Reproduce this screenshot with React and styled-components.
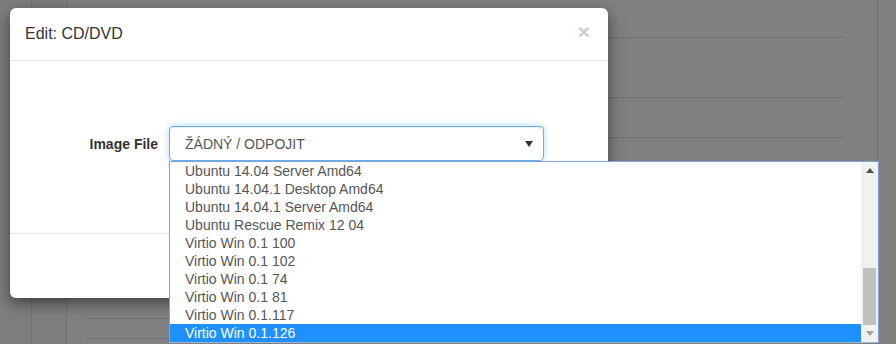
import styled, { createGlobalStyle } from 'styled-components';

const GlobalStyle = createGlobalStyle`
  html, body {
    margin: 0;
    padding: 0;
    background: #808080;
    overflow: hidden;
  }
  * {
    box-sizing: border-box;
  }
`;

const images = [
  'Ubuntu 14.04 Server Amd64',
  'Ubuntu 14.04.1 Desktop Amd64',
  'Ubuntu 14.04.1 Server Amd64',
  'Ubuntu Rescue Remix 12 04',
  'Virtio Win 0.1 100',
  'Virtio Win 0.1 102',
  'Virtio Win 0.1 74',
  'Virtio Win 0.1 81',
  'Virtio Win 0.1.117',
  'Virtio Win 0.1.126',
];

const rowHeights = [38, 60, 40, 41, 40, 40, 60, 20, 20];

const App = () => {
  return (
    <>
      <GlobalStyle />
      <Page>
        <Rail />
        <Rail $width={35} />
        <Main>
          <Table>
            {rowHeights.map((h, i) => (
              <TableRow key={i} $height={h} />
            ))}
          </Table>
        </Main>
        <Gutter />

        <Modal>
          <ModalHeader>
            <ModalTitle>Edit: CD/DVD</ModalTitle>
            <CloseButton>×</CloseButton>
          </ModalHeader>
          <ModalBody>
            <FormRow>
              <Label>Image File</Label>
              <Select>
                <span>ŽÁDNÝ / ODPOJIT</span>
                <Caret />
              </Select>
            </FormRow>
          </ModalBody>
          <ModalFooter />
        </Modal>

        <OptionList>
          <Options>
            {images.map((name, i) => (
              <Option key={name} $selected={i === images.length - 1}>
                {name}
              </Option>
            ))}
          </Options>
          <Scrollbar>
            <ScrollArrow>
              <svg width="8" height="5" viewBox="0 0 8 5">
                <path d="M0 5 L4 0 L8 5 Z" fill="#505050" />
              </svg>
            </ScrollArrow>
            <Track>
              <Thumb />
            </Track>
            <ScrollArrow>
              <svg width="8" height="5" viewBox="0 0 8 5">
                <path d="M0 0 L8 0 L4 5 Z" fill="#a3a3a3" />
              </svg>
            </ScrollArrow>
          </Scrollbar>
        </OptionList>
      </Page>
    </>
  );
};

export default App;

const Page = styled.div`
  position: relative;
  display: flex;
  width: 896px;
  height: 344px;
  overflow: hidden;
  font-family: 'Liberation Sans', Arial, sans-serif;
  background: #7e7e7e;
`;

const Rail = styled.div`
  width: ${({ $width }) => $width || 32}px;
  flex: none;
  border-right: 1px solid #717171;
`;

const Main = styled.div`
  width: 811px;
  flex: none;
  padding-left: 19px;
  padding-right: 33px;
  border-right: 1px solid #717171;
  background: #808080;
`;

const Gutter = styled.div`
  flex: 1;
  background: #808080;
`;

const Table = styled.div`
  display: flex;
  flex-direction: column;
`;

const TableRow = styled.div`
  height: ${({ $height }) => $height}px;
  flex: none;
  border-bottom: 1px solid #727272;
`;

const Modal = styled.div`
  position: absolute;
  left: 10px;
  top: 8px;
  width: 598px;
  height: 290px;
  display: flex;
  flex-direction: column;
  background: #fff;
  border-radius: 6px;
  box-shadow: 0 5px 15px rgba(0, 0, 0, 0.5);
  color: #333;
`;

const ModalHeader = styled.div`
  height: 53px;
  flex: none;
  display: flex;
  align-items: center;
  justify-content: space-between;
  padding: 0 15px;
  border-bottom: 1px solid #e5e5e5;
`;

const ModalTitle = styled.h4`
  margin: 0;
  font-size: 16px;
  font-weight: normal;
  color: #333;
`;

const CloseButton = styled.span`
  font-size: 21px;
  font-weight: bold;
  line-height: 1;
  color: #000;
  opacity: 0.2;
  margin-right: 3px;
  margin-top: -6px;
`;

const ModalBody = styled.div`
  height: 172px;
  flex: none;
  padding-top: 65px;
`;

const FormRow = styled.div`
  display: grid;
  grid-template-columns: 148px 375px;
  column-gap: 11px;
  align-items: center;
`;

const Label = styled.label`
  font-size: 14px;
  font-weight: bold;
  text-align: right;
  color: #333;
`;

const Select = styled.div`
  height: 35px;
  display: flex;
  align-items: center;
  justify-content: space-between;
  padding: 0 8px 0 15px;
  border: 1px solid #66afe9;
  border-radius: 4px;
  box-shadow: inset 0 1px 1px rgba(0, 0, 0, 0.075), 0 0 6px rgba(102, 175, 233, 0.5);
  font-size: 14px;
  color: #555;
`;

const Caret = styled.span`
  width: 0;
  height: 0;
  border-left: 4px solid transparent;
  border-right: 4px solid transparent;
  border-top: 6px solid #333;
  margin-right: 2px;
`;

const ModalFooter = styled.div`
  flex: 1;
  border-top: 1px solid #e5e5e5;
`;

const OptionList = styled.div`
  position: absolute;
  left: 169px;
  top: 161px;
  width: 710px;
  height: 182px;
  display: flex;
  background: #fff;
  border: 1px solid #7ea2d8;
  border-bottom-color: #9fb5d8;
`;

const Options = styled.ul`
  flex: 1;
  margin: 0;
  padding: 0;
  list-style: none;
`;

const Option = styled.li`
  height: 18px;
  line-height: 18px;
  padding-left: 15px;
  font-size: 14px;
  white-space: nowrap;
  color: ${({ $selected }) => ($selected ? '#fff' : '#555')};
  background: ${({ $selected }) => ($selected ? '#1e90ff' : 'transparent')};
`;

const Scrollbar = styled.div`
  width: 17px;
  flex: none;
  display: flex;
  flex-direction: column;
  background: #f1f1f1;
`;

const ScrollArrow = styled.div`
  height: 17px;
  flex: none;
  display: flex;
  align-items: center;
  justify-content: center;
`;

const Track = styled.div`
  flex: 1;
  display: flex;
  flex-direction: column;
  justify-content: flex-end;
  padding: 0 2px;
`;

const Thumb = styled.div`
  height: 57px;
  background: #c1c1c1;
`;
